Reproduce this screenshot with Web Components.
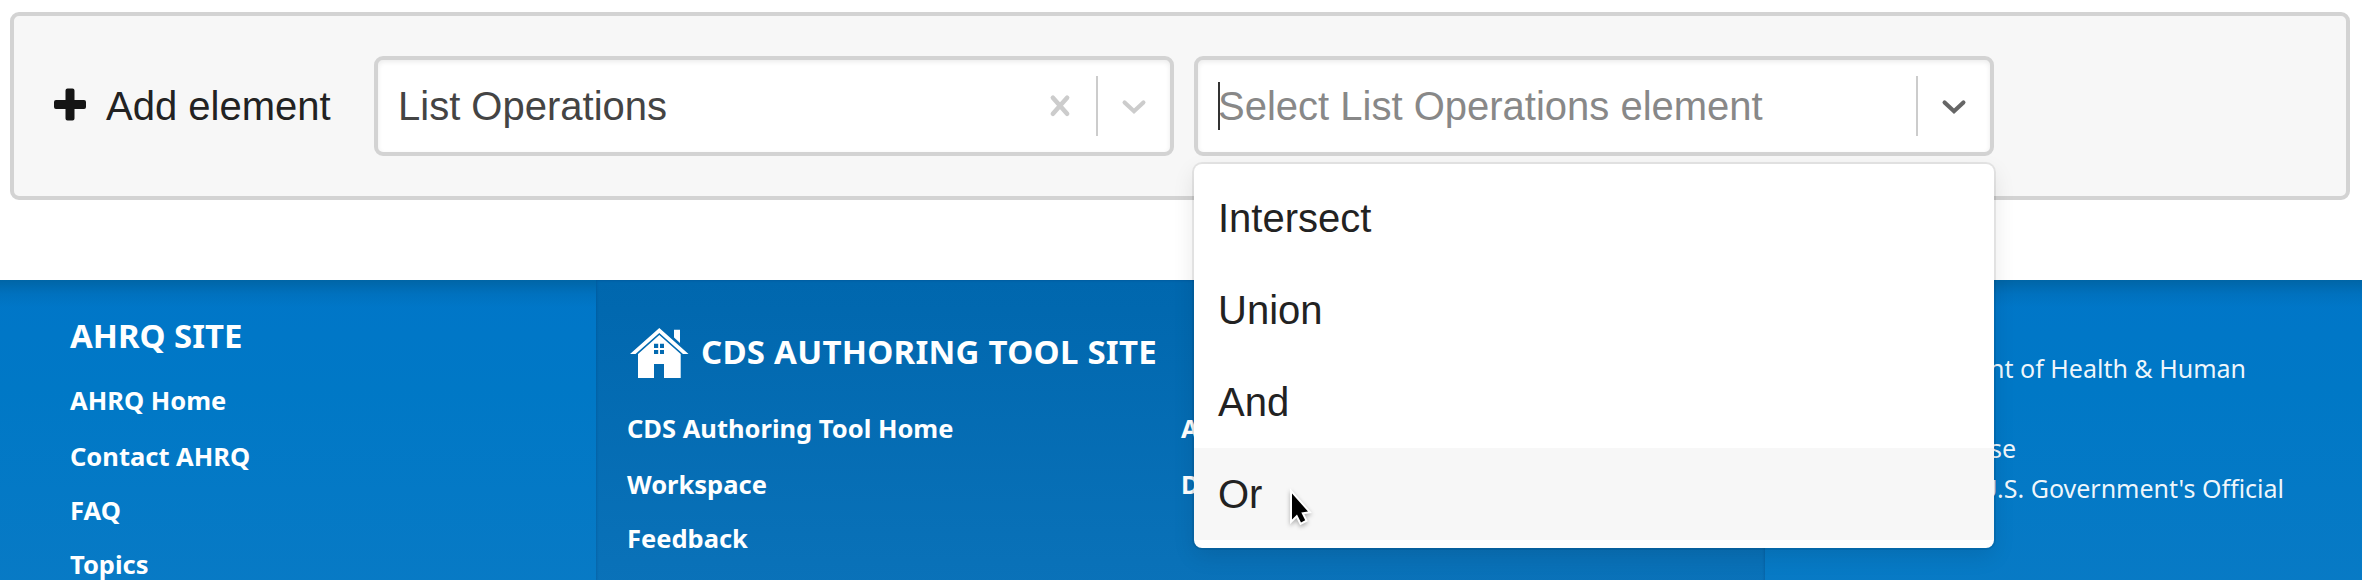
<!DOCTYPE html>
<html lang="en">
<head>
<meta charset="utf-8">
<title>CDS Authoring Tool</title>
<style>
body { margin: 0; width: 2362px; height: 580px; overflow: hidden; background: #fff; font-family: "Liberation Sans", Arial, sans-serif; }
</style>
</head>
<body>
<authoring-page></authoring-page>
<script>
const define = (name, markup) => customElements.define(name, class extends HTMLElement {
  constructor() {
    super();
    const t = document.createElement('template');
    t.innerHTML = markup;
    this.attachShadow({ mode: 'open' }).append(t.content.cloneNode(true));
  }
});

define('add-element-bar', `
<style>
:host { display: flex; align-items: center; box-sizing: border-box; height: 188px; margin: 12px 12px 0 10px; padding: 0 40px;
  border: 4px solid #d3d3d3; border-radius: 9px; background: #f7f7f7; font-size: 40px; line-height: 46px; color: #222; }
svg { width: 32px; height: 33px; margin: -3px 20px 0 0; flex: none; }
.label { width: 268px; white-space: nowrap; flex: none; }
.fields { display: flex; gap: 20px; }
</style>
<svg viewBox="0 0 32 33"><path fill="#151515" d="M13.500 0.500h5a2 2 0 0 1 2 2v9.500h9.500a2 2 0 0 1 2 2v5a2 2 0 0 1-2 2h-9.500v9.500a2 2 0 0 1-2 2h-5a2 2 0 0 1-2-2v-9.500h-9.500a2 2 0 0 1-2-2v-5a2 2 0 0 1 2-2h9.500v-9.500a2 2 0 0 1 2-2z"/></svg>
<span class="label">Add element</span>
<div class="fields"><slot></slot></div>`);

define('select-field', `
<style>
:host { display: flex; position: relative; align-items: center; box-sizing: border-box; width: 800px; height: 100px; padding: 0 16px 0 20px;
  border: 4px solid #d3d3d3; border-radius: 9px; background: #fff; box-shadow: inset 0 2px 5px rgba(0,0,0,.08); color: #444; }
.value { flex: 1; white-space: nowrap; }
:host([placeholder]) .value { color: #888; }
.sep { width: 2px; height: 60px; margin: 0 16px; background: #ccc; }
svg { width: 40px; height: 40px; fill: none; stroke: #ccc; flex: none; }
:host([placeholder]) .clear { display: none; }
:host([placeholder]) .arrow { stroke: #666; }
.caret { display: none; position: absolute; left: 20px; top: 22px; width: 2px; height: 48px; background: #333; }
:host([placeholder]) .caret { display: block; }
</style>
<span class="value"><slot></slot></span><i class="caret"></i>
<svg class="clear" viewBox="0 0 40 40" stroke-width="4.600" stroke-linecap="round"><path d="M12.900 11.800L27.100 27.800M27.100 11.800L12.900 27.800"/></svg>
<span class="sep"></span>
<svg class="arrow" viewBox="0 0 40 40" stroke-width="4.200" stroke-linecap="round"><path d="M10.600 16.500L20 25.200L29.400 16.500"/></svg>
<slot name="menu"></slot>`);

define('option-menu', `
<style>
:host { display: block; position: absolute; z-index: 5; left: -4px; top: 104px; box-sizing: border-box; width: 800px; padding: 8px 0; border-radius: 8px;
  background: #fff; box-shadow: 0 0 0 2px rgba(0,0,0,.07), 0 8px 22px rgba(0,0,0,.1); color: #222; }
</style><slot></slot>`);

define('menu-option', `
<style>
:host { display: flex; align-items: center; height: 92px; padding: 0 24px; }
:host([focused]) { background: #f7f7f7; }
</style><slot></slot>`);

define('mouse-pointer', `
<style>
:host { display: block; position: absolute; z-index: 6; left: 93px; top: 323px; width: 30px; height: 42px; }
svg { width: 30px; height: 42px; display: block; overflow: visible; filter: drop-shadow(0 2px 2px rgba(0,0,0,.3)); }
</style>
<svg viewBox="0 0 30 42"><path d="M5 6.500V32.500L10 27.500L14 35.500L18.200 33.300L14.300 25.500L21 24.500Z" fill="#000" stroke="#fff" stroke-width="4" paint-order="stroke"/></svg>`);

define('site-footer', `
<style>
:host { display: grid; grid-template-columns: 596px 1169px 597px; height: 300px; margin-top: 80px; overflow: hidden; color: #fff; font-family: "Noto Sans", sans-serif; }
</style><slot></slot>`);

define('footer-column', `
<style>
:host { display: block; box-sizing: border-box; padding: 36px 0 0 70px; background: linear-gradient(rgba(0,98,160,.85), rgba(0,105,175,.4) 14px, rgba(0,115,195,0) 27px), linear-gradient(#0076c8, #0078c6 35%, #087ac5); }
:host([main]) { padding: 52px 0 0 31px; background: linear-gradient(#0067ae, #0a72b9); box-shadow: inset 0 0 3px rgba(0,60,110,.45); }
:host([info]) { padding: 68px 0 0 32px; }
</style><slot></slot>`);

define('footer-heading', `
<style>
:host { display: flex; height: 40px; margin-bottom: 17px; font-size: 32.900px; line-height: 40px; font-weight: 700; white-space: nowrap; }
:host([home]) { margin-bottom: 29px; font-size: 33px; letter-spacing: .25px; }
svg { display: none; width: 59px; height: 50px; margin: -4px 12px 0 3px; flex: none; }
:host([home]) svg { display: block; }
</style>
<svg viewBox="0 0 59 50"><g fill="#fff"><path d="M29.300 0L58.500 26H53L29.300 5L5.500 26H0Z"/><path d="M44 1.800H50V15L44 9.500Z"/><path fill-rule="evenodd" d="M29.300 7L50.700 26V50H34V36H24V50H8V26ZM24 15.700V20H28.200V15.700ZM30 15.700V20H34V15.700ZM24 22V26H28.200V22ZM30 22V26H34V22Z"/></g></svg>
<slot></slot>`);

define('link-list', `
<style>
:host { display: grid; grid-template-rows: 56px; grid-auto-rows: 54px; font-size: 25.500px; line-height: 54px; font-weight: 700; white-space: nowrap; }
:host([pair]) { grid-template-columns: 554px 1fr; }
</style><slot></slot>`);

define('agency-line', `
<style>
:host { display: block; height: 40px; font-size: 25px; line-height: 40px; white-space: nowrap; text-align: right; color: rgba(255,255,255,.95); }
</style><slot></slot>`);

define('authoring-page', `
<style>
:host { display: flow-root; }
.w1 { width: 449px; } .w2 { width: 219px; } .w3 { width: 487px; }
.w0 { text-align: left; }
</style>
<add-element-bar>
  <select-field>List Operations</select-field>
  <select-field placeholder>Select List Operations element
    <option-menu slot="menu">
      <menu-option>Intersect</menu-option>
      <menu-option>Union</menu-option>
      <menu-option>And</menu-option>
      <menu-option focused>Or</menu-option>
      <mouse-pointer></mouse-pointer>
    </option-menu>
  </select-field>
</add-element-bar>
<site-footer>
  <footer-column>
    <footer-heading>AHRQ SITE</footer-heading>
    <link-list><span>AHRQ Home</span><span>Contact AHRQ</span><span>FAQ</span><span>Topics</span></link-list>
  </footer-column>
  <footer-column main>
    <footer-heading home>CDS AUTHORING TOOL SITE</footer-heading>
    <link-list pair><span>CDS Authoring Tool Home</span><span>A</span><span>Workspace</span><span>D</span><span>Feedback</span></link-list>
  </footer-column>
  <footer-column info>
    <agency-line class="w1">U.S. Department of Health &amp; Human</agency-line>
    <agency-line class="w0">Services</agency-line>
    <agency-line class="w2">The White House</agency-line>
    <agency-line class="w3">USA.gov: The U.S. Government's Official</agency-line>
  </footer-column>
</site-footer>`);
</script>
</body>
</html>
